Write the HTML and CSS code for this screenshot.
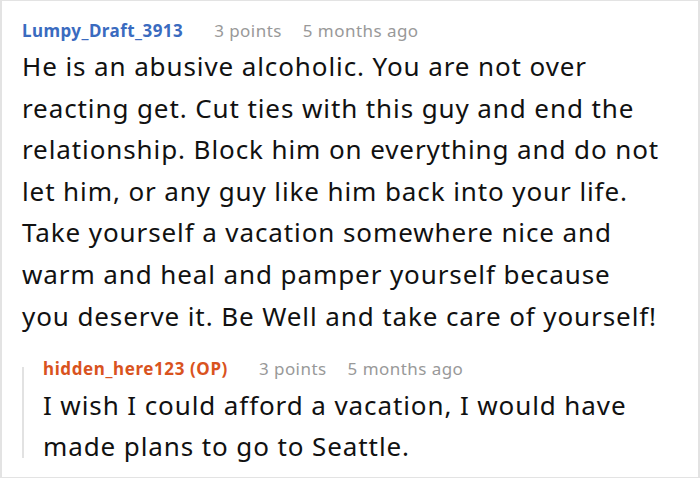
FILE: index.html
```html
<!DOCTYPE html>
<html>
<head>
<meta charset="utf-8">
<link rel="stylesheet" href="styles.css">
</head>
<body>
<div class="card">
  <div class="comment">
    <div class="meta">
      <span class="user">Lumpy_Draft_3913</span>
      <span class="points">3 points</span>
      <span class="time">5 months ago</span>
    </div>
    <p class="text">He is an abusive alcoholic. You are not over reacting get. Cut ties with this guy and end the relationship. Block him on everything and do not let him, or any guy like him back into your life. Take yourself a vacation somewhere nice and warm and heal and pamper yourself because you deserve it. Be Well and take care of yourself!</p>
    <div class="reply">
      <div class="meta">
        <span class="user op">hidden_here123 (OP)</span>
        <span class="points">3 points</span>
        <span class="time">5 months ago</span>
      </div>
      <p class="text">I wish I could afford a vacation, I would have made plans to go to Seattle.</p>
    </div>
  </div>
</div>
</body>
</html>
```
FILE: styles.css
```css
html, body {
  margin: 0;
  padding: 0;
  background: #ffffff;
}
.card {
  box-sizing: border-box;
  width: 700px;
  height: 478px;
  border: 1px solid #e3e3e3;
  border-left-width: 2px;
  border-right-width: 2px;
  font-family: "Noto Sans", "Open Sans", sans-serif;
  color: #111111;
  overflow: hidden;
}
.comment {
  padding: 15.5px 37px 0 20px;
}
.meta {
  display: flex;
  font-size: 17px;
  line-height: 27.2px;
  letter-spacing: 0.45px;
  color: #999999;
}
.user {
  font-weight: 700;
  color: #3a6bbf;
  margin-right: 31px;
}
.user.op {
  color: #d9531e;
  letter-spacing: 0.6px;
}
.points {
  margin-right: 21px;
}
.text {
  margin: 2.4px 0 0 0;
  font-size: 26px;
  line-height: 41.6px;
  letter-spacing: 0.9px;
}
.reply {
  position: relative;
  margin-top: 17.8px;
  padding-left: 21px;
}
.reply::before {
  content: "";
  position: absolute;
  left: 0;
  top: 11.5px;
  bottom: 10px;
  width: 2px;
  background: #e2e2e2;
}
```
